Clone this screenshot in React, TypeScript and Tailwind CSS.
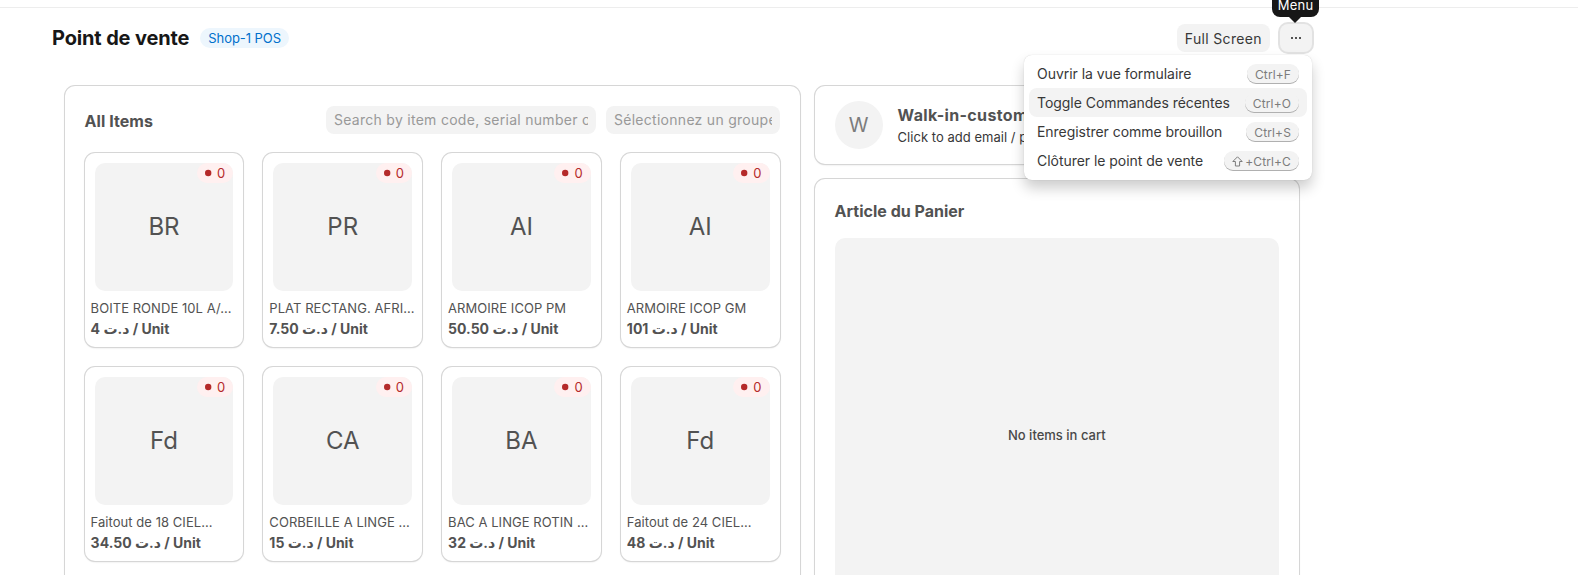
import React from "react";

const items = [
  { abbr: "BR", name: "BOITE RONDE 10L A/...", price: "4" },
  { abbr: "PR", name: "PLAT RECTANG. AFRI...", price: "7.50" },
  { abbr: "AI", name: "ARMOIRE ICOP PM", price: "50.50" },
  { abbr: "AI", name: "ARMOIRE ICOP GM", price: "101" },
  { abbr: "Fd", name: "Faitout de 18 CIEL...", price: "34.50" },
  { abbr: "CA", name: "CORBEILLE A LINGE ...", price: "15" },
  { abbr: "BA", name: "BAC A LINGE ROTIN ...", price: "32" },
  { abbr: "Fd", name: "Faitout de 24 CIEL...", price: "48" },
];

const actions = [
  { label: "Ouvrir la vue formulaire", keys: "Ctrl+F" },
  { label: "Toggle Commandes récentes", keys: "Ctrl+O", active: true },
  { label: "Enregistrer comme brouillon", keys: "Ctrl+S" },
  { label: "Clôturer le point de vente", keys: "+Ctrl+C", shift: true },
];

const panel = "rounded-[10px] bg-white shadow-[0_0_0_1px_#d6d6d6,0_1px_2px_rgba(0,0,0,0.15)]";

function ShiftIcon() {
  return (
    <svg className="mr-[2px]" width="11" height="11" viewBox="0 0 11 11" fill="none" stroke="#7c7c7c" strokeWidth="1" strokeLinejoin="round">
      <path d="M5.5 .8 L10.2 5.5 H7.6 V10 H3.4 V5.5 H.8 Z" />
    </svg>
  );
}

function ItemCard({ abbr, name, price }: { abbr: string; name: string; price: string }) {
  return (
    <div className={`${panel} flex h-[194px] min-w-0 flex-col`}>
      <div className="relative mx-[10px] mt-[10px] flex h-32 items-center justify-center rounded-[10px] bg-[#f3f3f3] text-2xl text-[#525252]">
        {abbr}
        <span className="absolute right-0 top-0 flex h-5 items-center gap-[5px] rounded-full bg-[#fff0f0] px-2 text-[13px] tracking-[0.02em] text-[#b52a2a]">
          <svg width="7" height="8" viewBox="0 0 7 8" fill="#b52a2a">
            <circle cx="3.2" cy="4" r="3.2" />
          </svg>
          <span className="pt-px">0</span>
        </span>
      </div>
      <div className="mt-2 whitespace-nowrap pl-[6px] text-[13px] leading-[18px] tracking-[0.004em] text-[#525252]">{name}</div>
      <div className="mt-[2px] whitespace-nowrap pl-[6px] text-sm font-bold leading-5 text-[#525252]">
        {price} د.ت / Unit
      </div>
    </div>
  );
}

export default function App() {
  return (
    <div className="h-[575px] overflow-hidden bg-white pt-[7px] font-['Inter','DejaVu_Sans',sans-serif] text-sm text-[#383838]">
      <div className="h-px bg-[#ededed]" />
      <header className="ml-[52px] flex h-[60px] w-[1260px] items-center">
        <h1 className="text-xl font-bold tracking-[-0.007em] text-[#171717]">Point de vente</h1>
        <span className="ml-[11px] flex h-5 items-center rounded-full bg-[#edf6fd] px-2 text-[13px] tracking-[-0.005em] text-[#0070cc]">
          Shop-1 POS
        </span>
        <button className="ml-auto h-7 rounded-lg bg-[#f3f3f3] px-2 pt-px tracking-[0.025em]">Full Screen</button>
        <div className="relative ml-[10px]">
          <button className="flex h-7 w-8 items-center justify-center gap-[2px] rounded-lg bg-[#f3f3f3] shadow-[0_0_0_2px_#e2e2e2]">
            <span className="size-[2px] bg-[#525252]" />
            <span className="size-[2px] bg-[#525252]" />
            <span className="size-[2px] bg-[#525252]" />
          </button>
          <div className="absolute -top-[31px] left-[-8px] h-6 w-[47px] rounded-lg bg-[#171717] text-center text-[13px] leading-6 tracking-[0.02em] text-white">
            Menu
            <svg className="absolute left-[17px] top-6" width="12" height="6" viewBox="0 0 12 6" fill="#171717">
              <path d="M0 0H12L6 6Z" />
            </svg>
          </div>
          <div className="absolute right-0 top-[31px] z-10 w-[288px] rounded-lg bg-white p-[5px] pt-1 shadow-[0_0_1px_rgba(0,0,0,0.2),0_8px_14px_rgba(0,0,0,0.2)]">
            {actions.map((a) => (
              <div
                key={a.label}
                className={`flex h-[29px] items-center justify-between rounded-lg px-2 tracking-[-0.003em] ${a.active ? "bg-[#f3f3f3]" : ""}`}
              >
                <span className="whitespace-nowrap">{a.label}</span>
                <kbd className="flex h-[19px] items-center rounded-[9px] bg-[#f3f3f3] px-2 pt-[2px] font-['Inter',sans-serif] text-[12px] tracking-[0.01em] text-[#7c7c7c] shadow-[0_1px_0_#b0b0b0]">
                  {a.shift && <ShiftIcon />}
                  {a.keys}
                </kbd>
              </div>
            ))}
          </div>
        </div>
      </header>
      <main className="ml-[64.6px] mt-[18px] flex w-[1234.4px] gap-[15px]">
        <section className={`${panel} h-[600px] w-[735px] px-5 pt-5`}>
          <div className="flex h-7 items-center">
            <h2 className="mt-[1px] text-base font-bold tracking-[0.003em] text-[#525252]">All Items</h2>
            <div className="ml-auto h-7 w-[270px] rounded-lg bg-[#f3f3f3] pl-[8.4px] pr-2">
              <div className="overflow-hidden whitespace-nowrap leading-7 tracking-[0.02em] text-[#999999]">
                Search by item code, serial number or barcode
              </div>
            </div>
            <div className="ml-[10px] h-7 w-[174px] rounded-lg bg-[#f3f3f3] pl-[8.4px] pr-2">
              <div className="overflow-hidden whitespace-nowrap leading-7 tracking-[0.02em] text-[#999999]">
                Sélectionnez un groupe d'articles
              </div>
            </div>
          </div>
          <div className="mt-[19px] grid grid-cols-4 gap-5">
            {items.map((item, i) => (
              <ItemCard key={i} {...item} />
            ))}
          </div>
        </section>
        <div className="flex w-[484.4px] flex-col gap-[15px]">
          <section className={`${panel} flex h-[78px] items-center px-5`}>
            <div className="flex size-12 items-center justify-center rounded-full bg-[#f3f3f3] text-xl text-[#7c7c7c]">W</div>
            <div className="ml-[15px]">
              <div className="pt-px text-base font-bold leading-5 tracking-[0.022em] text-[#525252]">Walk-in-customer</div>
              <div className="mt-[2px] text-[13px] leading-5 tracking-[0.002em]">Click to add email / phone</div>
            </div>
          </section>
          <section className={`${panel} h-[500px] px-5 pt-5`}>
            <h2 className="h-[39px] text-base font-bold leading-6 text-[#525252]">Article du Panier</h2>
            <div className="flex h-[394px] items-center justify-center rounded-[10px] bg-[#f3f3f3] text-[13px] font-medium text-[#484848]">
              No items in cart
            </div>
          </section>
        </div>
      </main>
    </div>
  );
}
